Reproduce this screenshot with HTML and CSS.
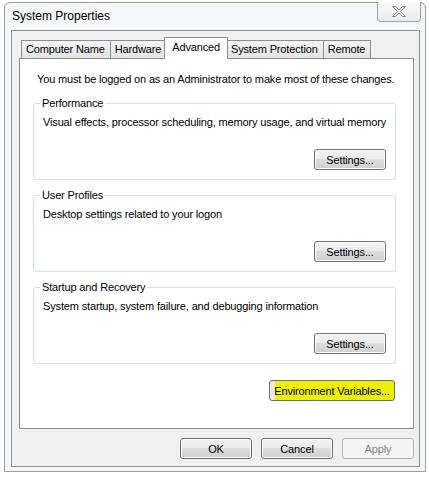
FILE: index.html
```html
<!DOCTYPE html>
<html lang="en">
<head>
  <meta charset="UTF-8">
  <meta name="viewport" content="width=device-width, initial-scale=1.0">
  <title>System Properties</title>
  <link rel="stylesheet" href="styles.css">
</head>
<body>
  <div class="window">
    <div class="titlebar">
      <span class="title">System Properties</span>
      <button class="close" aria-label="Close">
        <svg width="14" height="11" viewBox="0 0 14 11">
          <polygon points="0.5,0.5 3.5,0.5 7,4 10.5,0.5 13.5,0.5 8.5,5.5 13.5,10.5 10.5,10.5 7,7 3.5,10.5 0.5,10.5 5.5,5.5" fill="#fff" stroke="#808080" stroke-width="1"/>
        </svg>
      </button>
    </div>

    <div class="client">
      <div class="tabs">
        <div class="tab">Computer Name</div>
        <div class="tab">Hardware</div>
        <div class="tab active">Advanced</div>
        <div class="tab">System Protection</div>
        <div class="tab">Remote</div>
      </div>

      <div class="panel">
        <p class="intro">You must be logged on as an Administrator to make most of these changes.</p>

        <fieldset class="group">
          <legend>Performance</legend>
          <p class="desc">Visual effects, processor scheduling, memory usage, and virtual memory</p>
          <div class="group-actions"><button class="btn">Settings...</button></div>
        </fieldset>

        <fieldset class="group">
          <legend>User Profiles</legend>
          <p class="desc">Desktop settings related to your logon</p>
          <div class="group-actions"><button class="btn">Settings...</button></div>
        </fieldset>

        <fieldset class="group">
          <legend>Startup and Recovery</legend>
          <p class="desc">System startup, system failure, and debugging information</p>
          <div class="group-actions"><button class="btn">Settings...</button></div>
        </fieldset>

        <div class="env-row">
          <button class="btn env">Environment Variables...</button>
        </div>
      </div>

      <div class="dialog-buttons">
        <button class="btn">OK</button>
        <button class="btn">Cancel</button>
        <button class="btn" disabled>Apply</button>
      </div>
    </div>
  </div>
</body>
</html>
```

FILE: styles.css
```css
body {
  margin: 0;
  background: #fff;
  font-family: 'Liberation Sans', Arial, sans-serif;
  font-size: 11px;
  letter-spacing: -0.15px;
  color: #000;
}
.window {
  box-sizing: border-box;
  width: 422px;
  height: 470px;
  margin: 2px 0 0 4px;
  border: 1px solid #9a9ea3;
  border-radius: 6px 6px 0 0;
  background: #f5f6f8;
  padding: 0 5px 4px 6px;
  display: flex;
  flex-direction: column;
}
.titlebar {
  height: 27px;
  display: flex;
  align-items: flex-start;
  justify-content: space-between;
}
.title {
  margin: 6px 0 0 1px;
  font-size: 12px;
  letter-spacing: 0;
}
.close {
  width: 44px;
  height: 20px;
  margin: -1px -1px 0 0;
  padding: 0;
  border: 1px solid #a3a3a3;
  border-top: none;
  border-radius: 0 0 4px 4px;
  background: linear-gradient(#fbfbfb, #e9eaec);
  display: flex;
  align-items: center;
  justify-content: center;
}
.client {
  flex: 1;
  border: 1px solid #8f9296;
  background: #f0f0f0;
  padding: 6px 5px 7px 7px;
  display: flex;
  flex-direction: column;
}
.tabs {
  height: 21px;
  display: flex;
  align-items: flex-end;
  padding-left: 2px;
  position: relative;
  z-index: 1;
}
.tab {
  box-sizing: border-box;
  height: 18px;
  line-height: 17px;
  padding: 0 5px 0 4px;
  border: 1px solid #898c95;
  border-bottom: none;
  margin-right: -1px;
  background: linear-gradient(#f3f3f3, #e4e4e4);
  white-space: nowrap;
}
.tab.active {
  height: 22px;
  line-height: 18px;
  margin: 0 -2px -1px -2px;
  padding: 0 7px;
  background: #fff;
  position: relative;
  z-index: 2;
}
.panel {
  flex: 1;
  border: 1px solid #898c95;
  background: #fff;
  padding: 13px 17px 0 13px;
}
p {
  margin: 0;
  line-height: 15px;
  white-space: nowrap;
}
.intro {
  margin-left: 4px;
  margin-bottom: 9px;
}
.group {
  margin: 0 0 8px 0;
  padding: 0 9px 9px 9px;
  border: 1px solid #d5dfe5;
  border-radius: 3px;
  min-width: 0;
}
.group legend {
  padding: 0 2px;
  margin-left: -3px;
  line-height: 15px;
}
.desc {
  margin-top: 4px;
}
.group-actions {
  display: flex;
  justify-content: flex-end;
  margin-top: 19px;
}
.btn {
  box-sizing: border-box;
  width: 72px;
  height: 21px;
  padding: 0;
  border: 1px solid #707070;
  border-radius: 3px;
  background: linear-gradient(#f2f2f2 0%, #ebebeb 50%, #dddddd 50%, #cfcfcf 100%);
  box-shadow: inset 0 0 0 1px #fbfbfb;
  font-family: inherit;
  font-size: 11px;
  letter-spacing: inherit;
  color: #000;
}
.btn:disabled {
  border-color: #adb2b5;
  background: #f4f4f4;
  box-shadow: none;
  color: #838383;
}
.env-row {
  display: flex;
  justify-content: flex-end;
  margin: 16px 1px 0 0;
}
.btn.env {
  width: 126px;
  background: linear-gradient(90deg, #e8e8e8 0, #e8e8e8 5px, #f0f000 5px, #eeee00 100%);
  box-shadow: none;
}
.dialog-buttons {
  display: flex;
  justify-content: flex-end;
  gap: 9px;
  margin-top: 9px;
}
```
